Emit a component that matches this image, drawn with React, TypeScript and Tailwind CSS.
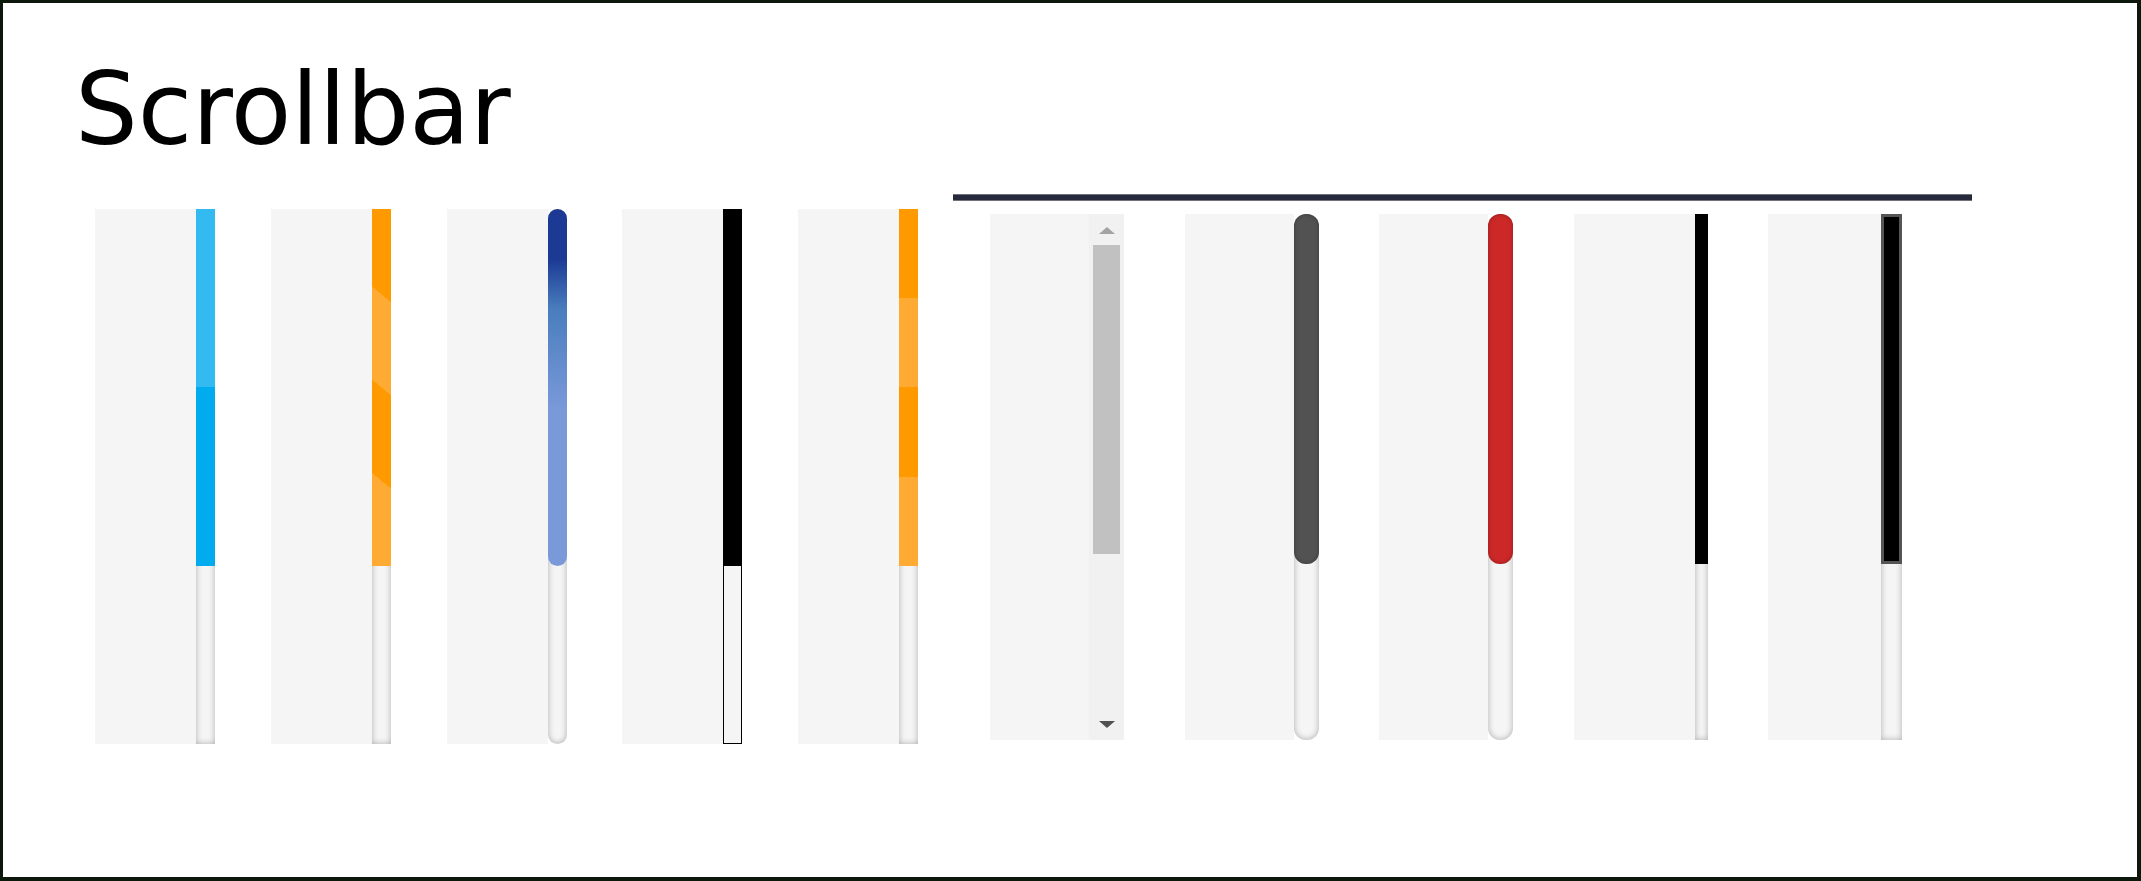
import React from 'react';

const trackShadow = 'shadow-[inset_0_0_6px_rgba(0,0,0,0.3)] bg-[#f5f5f5]';

// one demo panel: grey content area with the scrollbar column on its right
const Panel = ({ width, height, children }: { width: string; height: string; children: React.ReactNode }) => (
  <div className={`flex ${width} ${height}`}>
    <div className="flex-1 bg-[#f5f5f5]" />
    {children}
  </div>
);

// track and thumb stacked in the same grid cell
const Bar = ({ barW, track, thumb, thumbH }: { barW: string; track: string; thumb: string; thumbH: string }) => (
  <div className={`grid ${barW} h-full`}>
    <div className={`[grid-area:1/1] h-full ${track}`} />
    <div className={`[grid-area:1/1] self-start ${thumbH} ${thumb}`} />
  </div>
);

const LEFT = [
  {
    track: trackShadow,
    thumb: 'bg-[linear-gradient(to_bottom,#33bbf1_50%,#00abee_50%)]',
  },
  {
    track: trackShadow,
    thumb:
      'bg-[linear-gradient(220deg,#ff9900_25%,#ffab33_25%,#ffab33_50%,#ff9900_50%,#ff9900_75%,#ffab33_75%)]',
  },
  {
    track: `${trackShadow} rounded-[10px]`,
    thumb: 'rounded-[10px] bg-[linear-gradient(to_bottom,#1c3a94_14%,#497dbd_28%,#7a99d9_56%)]',
  },
  {
    track: 'border border-black bg-[#f5f5f5]',
    thumb: 'bg-black',
  },
  {
    track: trackShadow,
    thumb:
      'bg-[linear-gradient(to_bottom,#ff9900_25%,#ffab33_25%,#ffab33_50%,#ff9900_50%,#ff9900_75%,#ffab33_75%)]',
  },
];

const RIGHT = [
  {
    barW: 'w-[25px]',
    track: `${trackShadow} rounded-[12px]`,
    thumb: 'rounded-[12px] bg-[#525252] shadow-[inset_0_0_4px_rgba(0,0,0,0.3)]',
  },
  {
    barW: 'w-[25px]',
    track: `${trackShadow} rounded-[12px]`,
    thumb: 'rounded-[12px] bg-[#cd2828] shadow-[inset_0_0_4px_rgba(0,0,0,0.3)]',
  },
  {
    barW: 'w-[13px]',
    track: trackShadow,
    thumb: 'bg-black',
  },
  {
    barW: 'w-[21px]',
    track: trackShadow,
    thumb: 'bg-black border-[3px] border-[#555555]',
  },
];

export default function App() {
  return (
    <div className="w-full h-[881px] bg-white border-t-[3px] border-l-[3px] border-r-[4px] border-b-[4px] border-[#0c180c]">
      <h1 className="pl-[72px] pt-[57px] text-[99px] leading-[100px] text-black font-['DejaVu_Sans',sans-serif]">
        Scrollbar
      </h1>

      <div className="flex items-start pl-[92px] mt-[34px]">
        {/* first group */}
        <div className="flex gap-[55.75px] mt-[15px]">
          {LEFT.map((s, i) => (
            <Panel key={i} width="w-[120px]" height="h-[535px]">
              <Bar barW="w-[19px]" track={s.track} thumb={s.thumb} thumbH="h-[357px]" />
            </Panel>
          ))}
        </div>

        {/* second group under the rule */}
        <div className="flex flex-col ml-[35px]">
          <div className="w-[1019px] h-[7px] bg-[#272a3a] border-y border-[#6e707c]" />
          <div className="flex gap-[60.5px] pl-[37px] mt-[13px]">
            <Panel width="w-[134px]" height="h-[526px]">
              <div className="flex flex-col items-center w-[35px] h-full bg-[#f1f1f1] pt-[13px] pb-[12px]">
                <div className="w-0 h-0 border-x-[8px] border-x-transparent border-b-[7px] border-b-[#a3a3a3]" />
                <div className="w-[27px] h-[309px] mt-[11px] bg-[#c1c1c1]" />
                <div className="flex-1" />
                <div className="w-0 h-0 border-x-[8px] border-x-transparent border-t-[7px] border-t-[#505050]" />
              </div>
            </Panel>
            {RIGHT.map((s, i) => (
              <Panel key={i} width="w-[134px]" height="h-[526px]">
                <Bar barW={s.barW} track={s.track} thumb={s.thumb} thumbH="h-[350px]" />
              </Panel>
            ))}
          </div>
        </div>
      </div>
    </div>
  );
}
